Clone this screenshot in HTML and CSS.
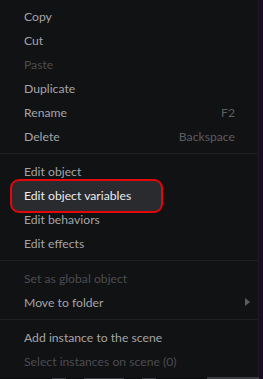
FILE: index.html
```html
<!DOCTYPE html>
<html>

<head>
    <title>Object context menu</title>
    <link rel="stylesheet" href="styles.css">
</head>

<body>
    <div class="menu">
        <div class="item">Copy</div>
        <div class="item">Cut</div>
        <div class="item disabled">Paste</div>
        <div class="item">Duplicate</div>
        <div class="item">Rename<span class="shortcut">F2</span></div>
        <div class="item">Delete<span class="shortcut">Backspace</span></div>
        <div class="separator"></div>
        <div class="item">Edit object</div>
        <div class="item hovered">Edit object variables<span class="annotation"></span></div>
        <div class="item">Edit behaviors</div>
        <div class="item">Edit effects</div>
        <div class="separator"></div>
        <div class="item disabled">Set as global object</div>
        <div class="item">Move to folder<span class="arrow"></span></div>
        <div class="separator"></div>
        <div class="item">Add instance to the scene</div>
        <div class="item disabled">Select instances on scene (0)</div>
    </div>
    <div class="below">
        <span class="below-bit"></span>
        <span class="below-bit wide"></span>
        <span class="below-bit"></span>
        <span class="below-bar"></span>
    </div>
</body>

</html>
```

FILE: styles.css
```css
body {
    margin: 0;
    background-color: #1c0b28;
    font-family: 'Lato', 'Noto Sans', sans-serif;
    font-size: 12.2px;
    overflow: hidden;
}

.menu {
    position: relative;
    z-index: 0;
    width: 258px;
    height: 373px;
    padding: 4px 0 0;
    background-color: #111214;
    border-right: solid 1px #1c1d21;
}

.item {
    position: relative;
    display: flex;
    align-items: center;
    justify-content: space-between;
    height: 24px;
    padding: 0 23px 0 24px;
    color: #a4a4a7;
    white-space: nowrap;
}

.item.disabled {
    color: #4b4c50;
}

.item.hovered {
    color: #ececee;
}

.shortcut {
    color: #5c5d61;
}

.arrow {
    margin-right: -15px;
    width: 0;
    height: 0;
    border-top: solid 4px transparent;
    border-bottom: solid 4px transparent;
    border-left: solid 5px #5d5e62;
}

.separator {
    height: 1px;
    margin: 5px 0;
    background-color: #202125;
}

    .item .annotation {
        position: absolute;
        left: 10px;
        top: -4px;
        width: 149px;
        height: 30px;
        border: solid 2px #e3060a;
        border-radius: 9px;
        background-color: #2a2b2f;
        z-index: -1;
    }

.below {
    display: flex;
    align-items: flex-end;
    gap: 18px;
    width: 259px;
    height: 3px;
    padding-left: 52px;
    box-sizing: border-box;
    background-color: #0e0f11;
}

.below-bit {
    width: 14px;
    height: 2px;
    background-color: #3a3b3f;
}

.below-bit.wide {
    width: 40px;
}

.below-bar {
    margin-left: auto;
    width: 52px;
    height: 3px;
    background-color: #3a3b3f;
}
```
